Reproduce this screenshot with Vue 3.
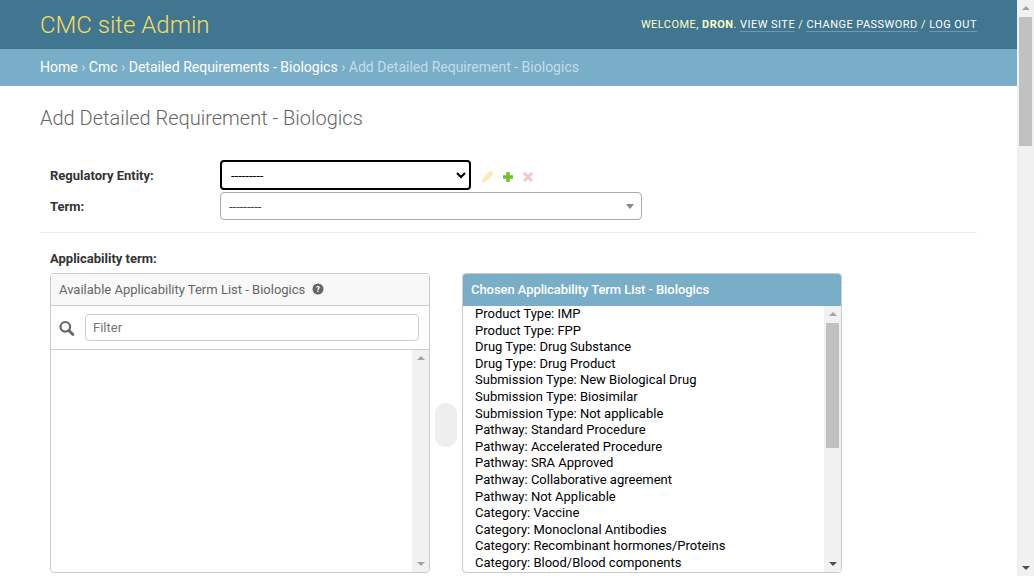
<template>
  <div class="page">
    <div class="main">
      <header class="topbar">
        <div class="brand">CMC site Admin</div>
        <div class="tools">
          Welcome, <strong>Dron</strong>.
          <a>View site</a> / <a>Change password</a> / <a>Log out</a>
        </div>
      </header>

      <nav class="crumbs">
        <a>Home</a> › <a>Cmc</a> › <a>Detailed Requirements - Biologics</a> › Add Detailed Requirement - Biologics
      </nav>

      <main class="content">
        <h1>Add Detailed Requirement - Biologics</h1>

        <div class="fields">
          <div class="row">
            <label>Regulatory Entity:</label>
            <select class="entity"><option>---------</option></select>
            <div class="actions">
              <svg class="faded" width="13" height="13" viewBox="0 0 13 13">
                <path d="M9.300.4l3.300 3.300-8 8-3.900 1 .8-4.100zM9.300.4z" fill="#efb80b" />
              </svg>
              <svg width="12" height="12" viewBox="0 0 12 12">
                <path d="M4.300 1h3.400v3.300H11v3.400H7.700V11H4.300V7.700H1V4.300h3.300z" fill="#70bf2b" />
              </svg>
              <svg class="faded" width="12" height="12" viewBox="0 0 12 12">
                <path d="M3 1l3 3 3-3 2 2-3 3 3 3-2 2-3-3-3 3-2-2 3-3-3-3z" fill="#dd4646" />
              </svg>
            </div>
          </div>
          <div class="row term-row">
            <label>Term:</label>
            <div class="term">
              <span>---------</span>
              <i class="caret"></i>
            </div>
          </div>
        </div>

        <div class="block">
          <label class="block-label">Applicability term:</label>
          <div class="selector">
            <section class="box">
              <div class="box-title">
                Available Applicability Term List - Biologics
                <svg width="12" height="12" viewBox="0 0 12 12">
                  <circle cx="6" cy="6" r="5.500" fill="#666" />
                  <path d="M4.100 4.600C4.200 3.500 5 3 6 3c1.100 0 1.900.6 1.900 1.500 0 1.400-1.400 1.200-1.400 2.400H5.300c0-1.700 1.300-1.600 1.300-2.400 0-.4-.3-.6-.7-.6s-.7.2-.8.8z" fill="#fff" />
                  <rect x="5.200" y="7.600" width="1.400" height="1.400" fill="#fff" />
                </svg>
              </div>
              <div class="filter">
                <svg width="16" height="16" viewBox="0 0 16 16">
                  <circle cx="6.300" cy="6.800" r="4.800" fill="none" stroke="#666" stroke-width="2.200" />
                  <path d="M9.900 10.400l4 4" stroke="#666" stroke-width="2.800" stroke-linecap="round" />
                </svg>
                <div class="filter-input">Filter</div>
              </div>
              <div class="list">
                <div class="options"></div>
                <div class="sb">
                  <i class="up"></i>
                  <i class="spring"></i>
                  <i class="down light"></i>
                </div>
              </div>
            </section>

            <div class="chooser"></div>

            <section class="box">
              <div class="box-title chosen">Chosen Applicability Term List - Biologics</div>
              <div class="list">
                <div class="options">
                  <div v-for="item in chosen" :key="item" class="opt">{{ item }}</div>
                </div>
                <div class="sb">
                  <i class="up"></i>
                  <i class="thumb list-thumb"></i>
                  <i class="spring"></i>
                  <i class="down"></i>
                </div>
              </div>
            </section>
          </div>
        </div>
      </main>
    </div>

    <div class="sb page-sb">
      <i class="up"></i>
      <i class="thumb page-thumb"></i>
      <i class="spring"></i>
      <i class="down"></i>
    </div>
  </div>
</template>

<script setup>
const chosen = [
  'Product Type: IMP',
  'Product Type: FPP',
  'Drug Type: Drug Substance',
  'Drug Type: Drug Product',
  'Submission Type: New Biological Drug',
  'Submission Type: Biosimilar',
  'Submission Type: Not applicable',
  'Pathway: Standard Procedure',
  'Pathway: Accelerated Procedure',
  'Pathway: SRA Approved',
  'Pathway: Collaborative agreement',
  'Pathway: Not Applicable',
  'Category: Vaccine',
  'Category: Monoclonal Antibodies',
  'Category: Recombinant hormones/Proteins',
  'Category: Blood/Blood components'
]
</script>

<style>
html,
body {
  margin: 0;
  overflow: hidden;
}
</style>

<style scoped>
.page {
  display: flex;
  height: 576px;
  overflow: hidden;
  background: #fff;
  font-family: Roboto, "Liberation Sans", sans-serif;
  color: #333;
}

.main {
  flex: 1;
  min-width: 0;
}

.topbar {
  height: 49px;
  box-sizing: border-box;
  padding: 0 40px;
  display: flex;
  align-items: center;
  justify-content: space-between;
  background: #417690;
}

.brand {
  font-size: 24px;
  font-weight: 300;
  color: #f5dd5d;
}

.tools {
  font-size: 11px;
  font-weight: 400;
  letter-spacing: 0.46px;
  text-transform: uppercase;
  color: #ffc;
}

.tools strong {
  font-weight: 700;
}

.tools a {
  color: #fff;
  border-bottom: 1px solid rgba(255, 255, 255, 0.25);
}

.crumbs {
  height: 37px;
  box-sizing: border-box;
  padding: 0 40px;
  line-height: 36px;
  background: #79aec8;
  color: #c4dce8;
  font-size: 14px;
}

.crumbs a {
  color: #fff;
}

.content {
  padding: 20px 40px;
}

h1 {
  margin: 0;
  font-size: 20px;
  font-weight: 300;
  line-height: 24px;
  color: #666;
}

.fields {
  margin-top: 30px;
  padding: 0 10px 12px;
  border-bottom: 1px solid #eee;
}

.row {
  display: flex;
  align-items: center;
}

.term-row {
  margin-top: 2px;
}

.row label,
.block-label {
  font-size: 13px;
  font-weight: 700;
  color: #333;
}

.row label {
  width: 170px;
}

.entity {
  width: 251px;
  height: 30px;
  box-sizing: border-box;
  padding: 0 5px;
  border: 2px solid #000;
  border-radius: 4px;
  background: #fff;
  color: #000;
  font: 13px Roboto, sans-serif;
  outline: none;
}

.actions {
  display: flex;
  align-items: center;
  gap: 8px;
  margin-left: 10px;
  margin-top: 3px;
}

.faded {
  opacity: 0.3;
}

.term {
  width: 422px;
  height: 28px;
  box-sizing: border-box;
  padding: 0 8px;
  display: flex;
  align-items: center;
  justify-content: space-between;
  border: 1px solid #aaa;
  border-radius: 4px;
  font-size: 13px;
  color: #444;
}

.caret {
  width: 0;
  height: 0;
  border-left: 4px solid transparent;
  border-right: 4px solid transparent;
  border-top: 5px solid #888;
  margin-right: -1px;
}

.block {
  padding: 18px 10px 0;
}

.block-label {
  display: block;
  line-height: 16px;
}

.selector {
  display: flex;
  margin-top: 6px;
}

.box {
  width: 380px;
  height: 300px;
  box-sizing: border-box;
  display: flex;
  flex-direction: column;
  border: 1px solid #ccc;
  border-radius: 4px;
  overflow: hidden;
}

.box-title {
  height: 32px;
  box-sizing: border-box;
  display: flex;
  align-items: center;
  gap: 7px;
  padding: 0 8px 1px;
  flex: none;
  background: #f8f8f8;
  border-bottom: 1px solid #ccc;
  color: #666;
  font-size: 13px;
}

.box-title.chosen {
  background: #79aec8;
  border-bottom-color: #79aec8;
  color: #fff;
  font-weight: 500;
  letter-spacing: -0.07px;
}

.filter {
  display: flex;
  align-items: center;
  gap: 10px;
  height: 44px;
  box-sizing: border-box;
  padding: 0 10px 0 8px;
  flex: none;
  border-bottom: 1px solid #ccc;
}

.filter-input {
  flex: 1;
  height: 27px;
  box-sizing: border-box;
  padding: 0 7px;
  line-height: 25px;
  border: 1px solid #ccc;
  border-radius: 4px;
  font-size: 13px;
  color: #757575;
}

.list {
  flex: 1;
  min-height: 0;
  display: flex;
}

.options {
  flex: 1;
  min-width: 0;
  overflow: hidden;
  padding: 0 12px;
}

.opt {
  height: 16.6px;
  line-height: 16.6px;
  font-size: 13px;
  color: #000;
  white-space: nowrap;
}

.sb {
  width: 17px;
  flex: none;
  display: flex;
  flex-direction: column;
  align-items: center;
  background: #f1f1f1;
}

.sb i {
  display: block;
  flex: none;
}

.sb .spring {
  flex: 1;
}

.sb .up,
.sb .down {
  width: 0;
  height: 0;
  border-left: 4px solid transparent;
  border-right: 4px solid transparent;
}

.sb .up {
  margin-top: 6px;
  margin-bottom: 7px;
  border-bottom: 4px solid #a3a3a3;
}

.sb .down {
  margin-top: 7px;
  margin-bottom: 6px;
  border-top: 4px solid #505050;
}

.sb .down.light {
  border-top-color: #a3a3a3;
}

.thumb {
  width: 13px;
  background: #c1c1c1;
}

.list-thumb {
  height: 125px;
}

.page-thumb {
  height: 129px;
}

.chooser {
  width: 22px;
  height: 44px;
  margin: 130px 5px 0;
  flex: none;
  border-radius: 11px;
  background: #eee;
}
</style>
